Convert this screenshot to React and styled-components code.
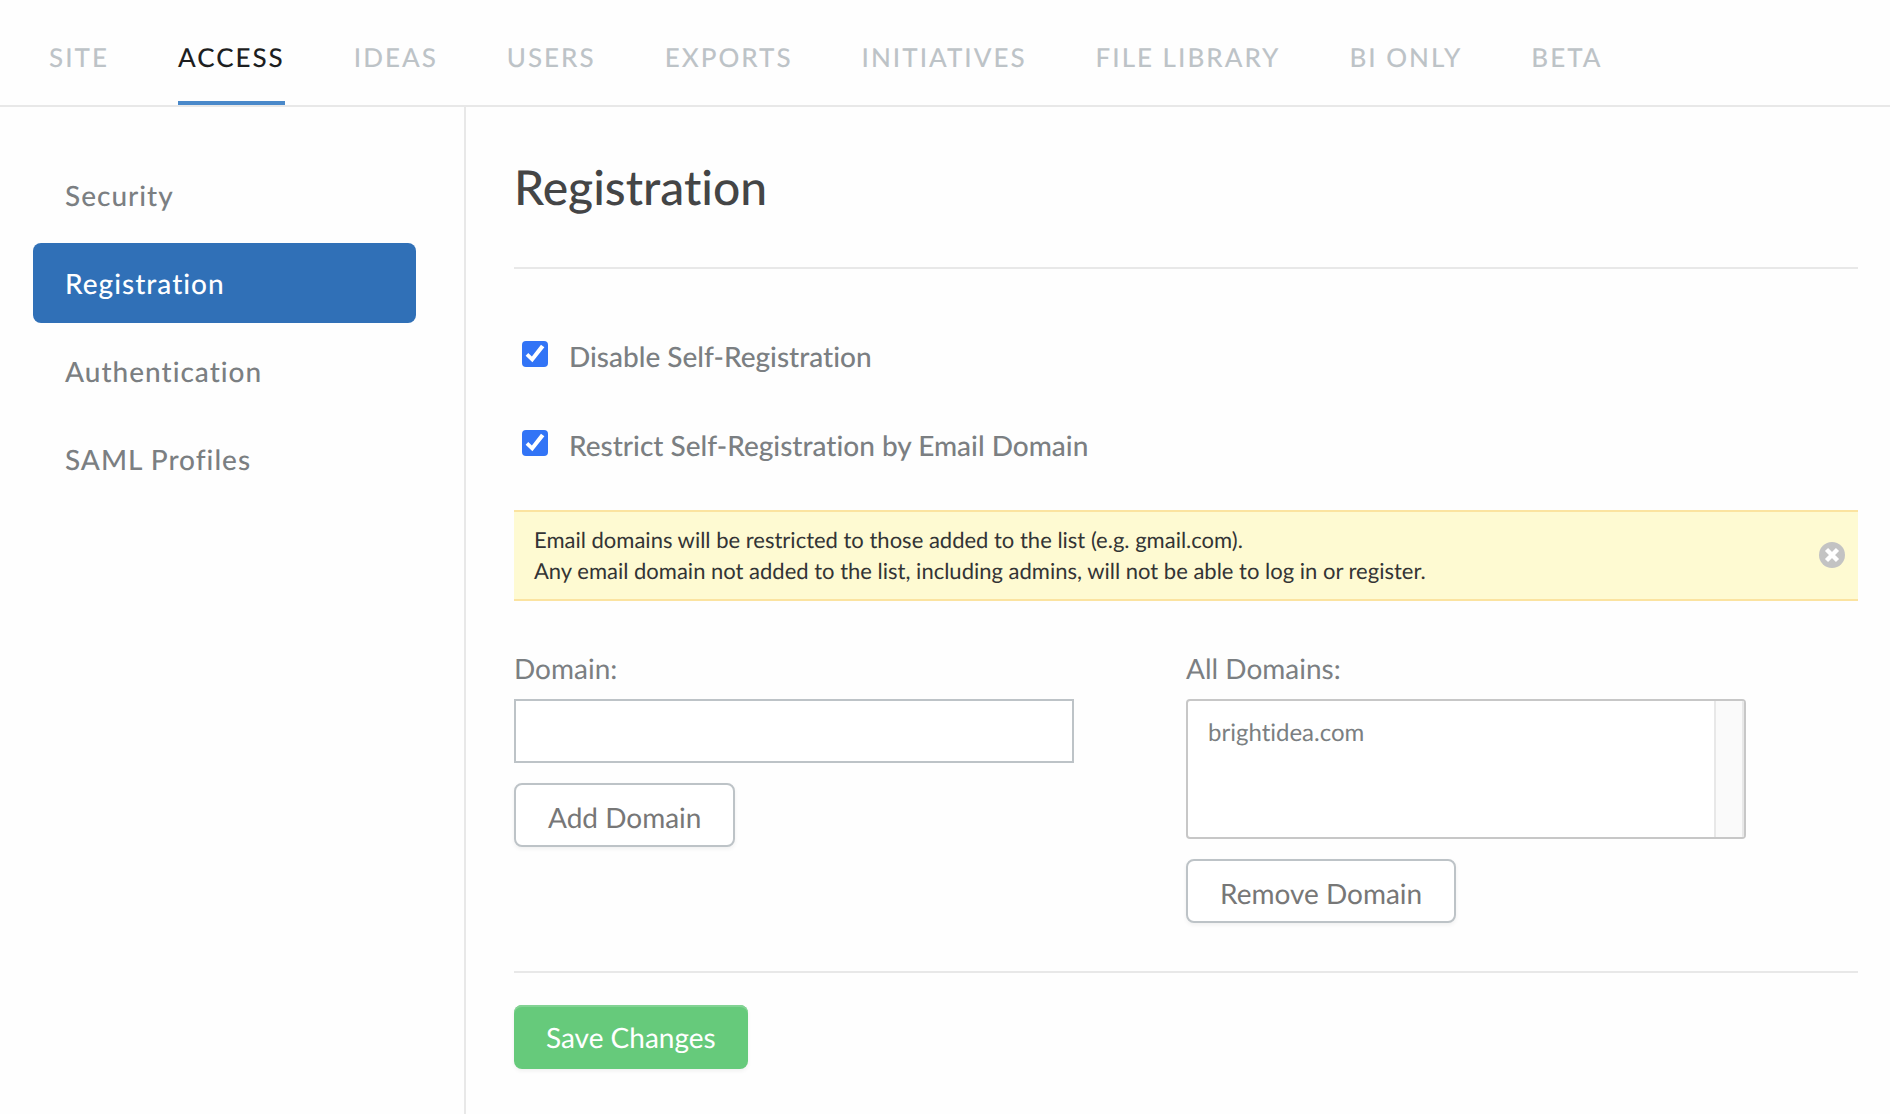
import React, { useState } from "react";
import styled, { createGlobalStyle } from "styled-components";

const GlobalStyle = createGlobalStyle`
  *, *::before, *::after { box-sizing: border-box; }
  body {
    margin: 0;
    background: #fefefe;
    color: #7b7f82;
    font-family: Lato, "Open Sans", sans-serif;
    font-size: 28px;
    line-height: 34px;
    font-variant-ligatures: none;
    text-rendering: geometricPrecision;
  }
  button, input, select { font: inherit; text-rendering: inherit; }
`;

const Page = styled.div`
  display: flex;
  flex-direction: column;
  min-height: 100vh;
`;

const TopNav = styled.nav`
  display: flex;
  gap: 69px;
  padding: 0 49px;
  border-bottom: 2px solid #e8e8e8;
`;

const TopLink = styled.a`
  padding: 43px 0 30px;
  border-bottom: 4px solid ${(p) => (p.$active ? "#4a89ca" : "transparent")};
  color: ${(p) => (p.$active ? "#1d1e1f" : "#bdc3c7")};
  font-size: 26px;
  font-weight: 500;
  line-height: 28px;
  letter-spacing: 2px;
  text-decoration: none;
  text-transform: uppercase;
  white-space: nowrap;
`;

const Body = styled.div`
  display: flex;
  flex: 1;
`;

const Sidebar = styled.nav`
  display: flex;
  flex: none;
  flex-direction: column;
  gap: 8px;
  width: 466px;
  padding: 48px 48px 48px 33px;
  border-right: 2px solid #e8e8e8;
`;

const SideLink = styled.a`
  padding: 23px 32px;
  border-radius: 8px;
  background: ${(p) => (p.$active ? "#3070b7" : "transparent")};
  color: ${(p) => (p.$active ? "#ffffff" : "#7b7f82")};
  font-weight: 500;
  letter-spacing: 1px;
  text-decoration: none;
`;

const Main = styled.main`
  flex: 1;
  min-width: 0;
  padding: 48px 32px 44px 48px;
`;

const Title = styled.h1`
  margin: 0;
  padding: 2px 0 48px;
  border-bottom: 2px solid #e8e8e8;
  color: #444546;
  font-size: 48px;
  font-weight: 500;
  line-height: 62px;
`;

const Options = styled.div`
  display: flex;
  flex-direction: column;
  gap: 59px;
  padding: 72px 8px 50px;
  font-weight: 500;
  line-height: 30px;
`;

const Option = styled.label`
  display: flex;
  gap: 21px;
`;

const Checkbox = styled.input`
  display: grid;
  flex: none;
  width: 26px;
  height: 26px;
  margin: 0;
  border-radius: 4px;
  background: #3274f6;
  appearance: none;

  &:not(:checked) {
    border: 2px solid #8a8a8a;
    background: #ffffff;
  }

  &:checked::before {
    content: "";
    background: #ffffff;
    clip-path: polygon(14% 57%, 24% 46%, 38% 60%, 73% 14%, 86% 24%, 40% 82%);
  }
`;

const Notice = styled.div`
  display: flex;
  align-items: center;
  justify-content: space-between;
  padding: 12px 13px 13px 20px;
  border: solid #fbe3a0;
  border-width: 2px 0;
  background: #fefad2;
  color: #333435;
  font-size: 22px;
  line-height: 31px;
`;

const NoticeText = styled.p`
  margin: 0;
`;

const CloseButton = styled.button`
  display: flex;
  padding: 0;
  border: 0;
  background: none;
  cursor: pointer;
`;

const Columns = styled.div`
  display: grid;
  grid-template-columns: 1fr 1fr;
  padding: 50px 0 48px;
  border-bottom: 2px solid #e8e8e8;
`;

const Field = styled.div`
  display: flex;
  flex-direction: column;
  align-items: flex-start;
`;

const FieldLabel = styled.label`
  margin-bottom: 14px;
`;

const TextInput = styled.input`
  width: calc(100% * 5 / 6);
  height: 64px;
  margin-bottom: 20px;
  padding: 0 20px;
  border: 2px solid #bdc3c7;
  border-radius: 0;
  background: #ffffff;
  color: #7b7f82;
  outline: none;
`;

const DomainBox = styled.div`
  display: flex;
  width: calc(100% * 5 / 6);
  height: 140px;
  margin-bottom: 20px;
  border: 2px solid #c7c7c7;
  border-radius: 4px;
  background: #ffffff;
  overflow: hidden;
`;

const DomainList = styled.select`
  flex: 1;
  min-width: 0;
  padding: 17px 0;
  border: 0;
  background: transparent;
  color: #7b7f82;
  font-size: 24px;
  outline: none;

  option {
    padding: 0 20px;
    line-height: 34px;
  }
`;

const ScrollTrack = styled.div`
  width: 30px;
  border: solid #e8e8e8;
  border-width: 0 2px;
  background: #fafafa;
`;

const Button = styled.button`
  height: 64px;
  padding: 4px 32px 0;
  border: 2px solid #bdc3c7;
  border-radius: 8px;
  background: #ffffff;
  box-shadow: 0 2px 4px rgba(0, 0, 0, 0.06);
  color: #777777;
  cursor: pointer;
`;

const SaveButton = styled(Button)`
  margin-top: 32px;
  padding: 0 32px;
  border: 0;
  background: #66ca7b;
  box-shadow: inset 0 2px 0 #83d394, 0 2px 4px rgba(0, 0, 0, 0.06);
  color: #ffffff;
`;

const sections = ["Site", "Access", "Ideas", "Users", "Exports", "Initiatives", "File Library", "BI Only", "Beta"];
const pages = ["Security", "Registration", "Authentication", "SAML Profiles"];

function CloseIcon() {
  return (
    <svg width="26" height="26" viewBox="0 0 26 26" aria-hidden="true">
      <circle cx="13" cy="13" r="13" fill="#c3c3c3" />
      <path d="M7.5 7.5L18.5 18.5M18.5 7.5L7.5 18.5" stroke="#ffffff" strokeWidth="4.4" />
    </svg>
  );
}

export default function App() {
  const [noticeOpen, setNoticeOpen] = useState(true);
  return (
    <Page>
      <GlobalStyle />
      <TopNav aria-label="Sections">
        {sections.map((name) => (
          <TopLink key={name} href="#" $active={name === "Access"}>
            {name}
          </TopLink>
        ))}
      </TopNav>
      <Body>
        <Sidebar aria-label="Access pages">
          {pages.map((name) => (
            <SideLink key={name} href="#" $active={name === "Registration"}>
              {name}
            </SideLink>
          ))}
        </Sidebar>
        <Main>
          <Title>Registration</Title>
          <Options>
            <Option>
              <Checkbox type="checkbox" defaultChecked />
              Disable Self-Registration
            </Option>
            <Option>
              <Checkbox type="checkbox" defaultChecked />
              Restrict Self-Registration by Email Domain
            </Option>
          </Options>
          {noticeOpen && (
            <Notice>
              <NoticeText>
                Email domains will be restricted to those added to the list (e.g. gmail.com).
                <br />
                Any email domain not added to the list, including admins, will not be able to log in or register.
              </NoticeText>
              <CloseButton type="button" aria-label="Dismiss" onClick={() => setNoticeOpen(false)}>
                <CloseIcon />
              </CloseButton>
            </Notice>
          )}
          <Columns>
            <Field>
              <FieldLabel htmlFor="domain">Domain:</FieldLabel>
              <TextInput id="domain" type="text" />
              <Button type="button">Add Domain</Button>
            </Field>
            <Field>
              <FieldLabel htmlFor="all-domains">All Domains:</FieldLabel>
              <DomainBox>
                <DomainList id="all-domains" multiple size={3}>
                  <option>brightidea.com</option>
                </DomainList>
                <ScrollTrack />
              </DomainBox>
              <Button type="button">Remove Domain</Button>
            </Field>
          </Columns>
          <SaveButton type="button">Save Changes</SaveButton>
        </Main>
      </Body>
    </Page>
  );
}
